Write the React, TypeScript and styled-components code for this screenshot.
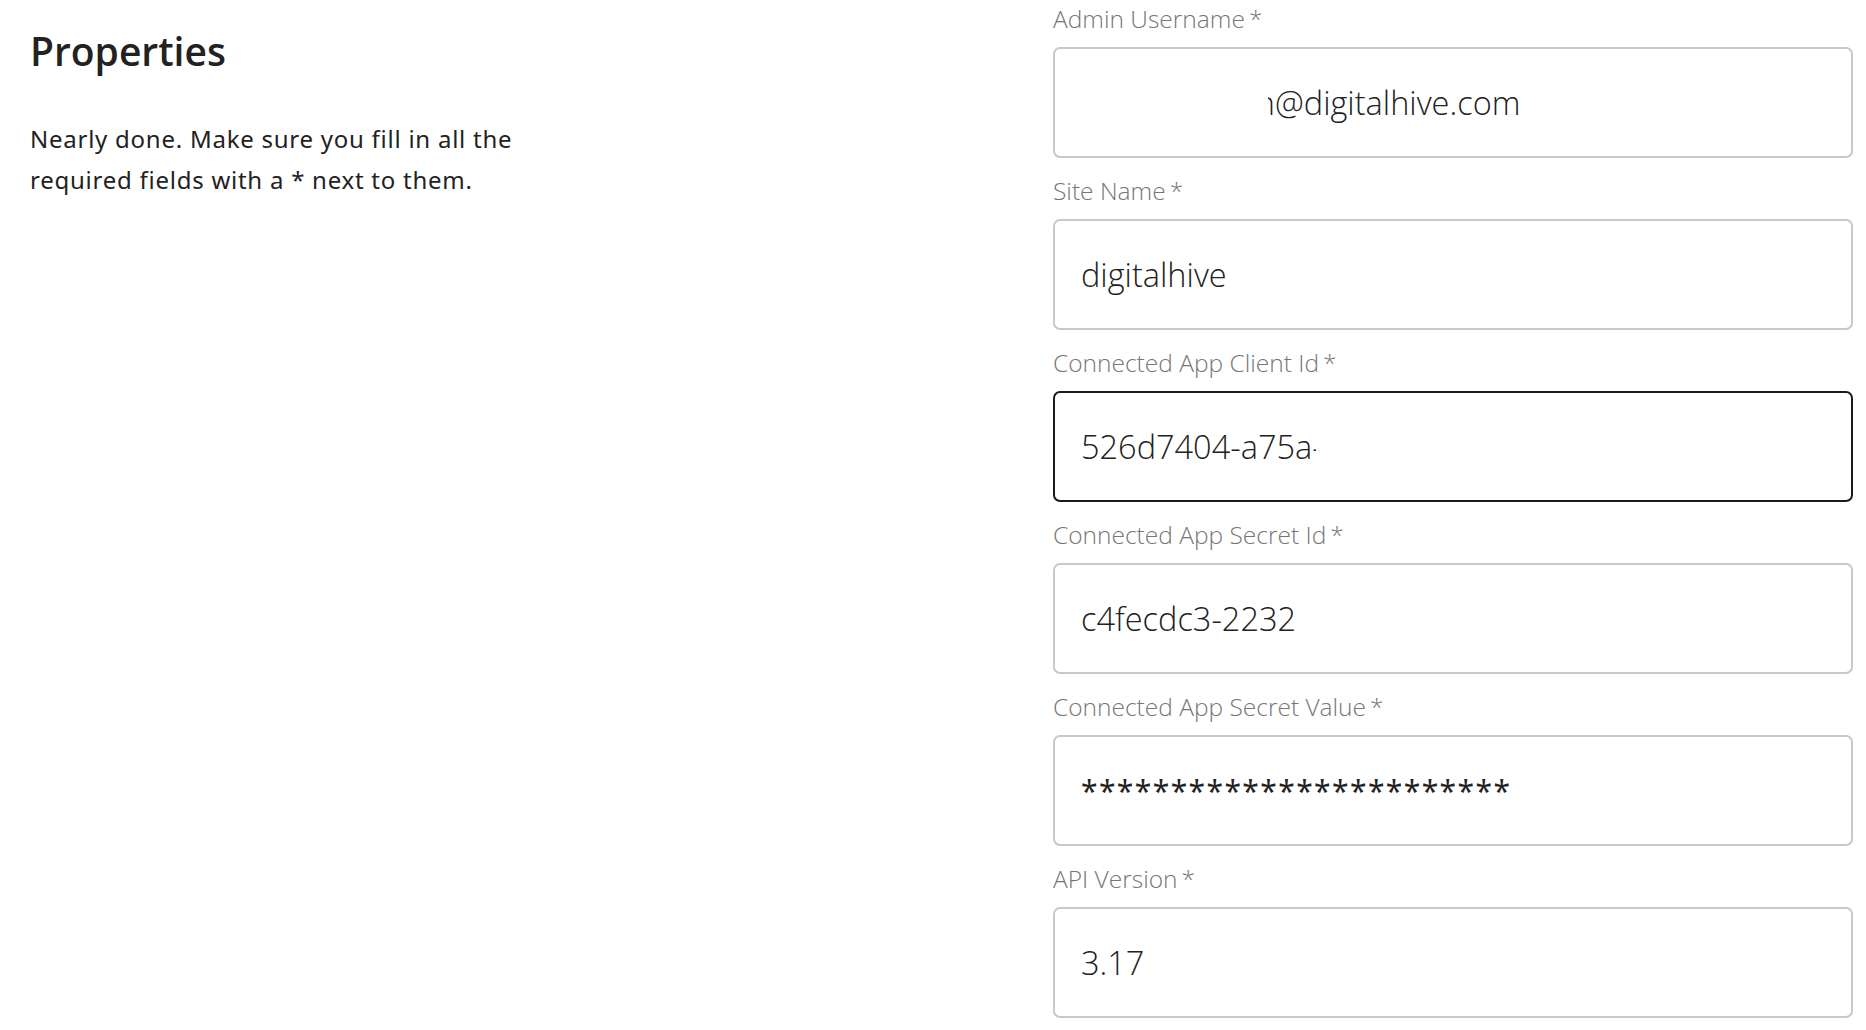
import React from 'react';
import styled, {createGlobalStyle} from 'styled-components';

const GlobalStyle = createGlobalStyle`
    html, body {
        margin: 0;
        padding: 0;
        background: #ffffff;
    }

    body {
        font-family: "Open Sans", "Noto Sans", sans-serif;
        color: #222222;
    }
`;

const Page = styled.div`
    display: grid;
    grid-template-columns: 1fr 800px;
    padding: 0 13px 0 30px;
    height: 1030px;
    overflow: hidden;
    box-sizing: border-box;
`;

const Intro = styled.div`
    display: flex;
    flex-direction: column;
`;

const Heading = styled.h2`
    margin: 27px 0 0 0;
    font-family: "Open Sans", sans-serif;
    font-size: 39px;
    line-height: 48px;
    font-weight: 600;
    color: #222222;
`;

const Description = styled.p`
    margin: 43px 0 0 0;
    width: 500px;
    font-family: "Noto Sans", "Open Sans", sans-serif;
    font-size: 24px;
    line-height: 41px;
    letter-spacing: 0.75px;
    color: #222222;
`;

const Form = styled.div`
    display: flex;
    flex-direction: column;
    gap: 17px;
    padding-top: 3px;
`;

const FieldGroup = styled.div`
    display: flex;
    flex-direction: column;
`;

const Label = styled.label`
    font-family: "Open Sans", sans-serif;
    font-weight: 300;
    font-size: 24.5px;
    line-height: 32px;
    color: #767676;
    margin-bottom: 12px;
`;

const Required = styled.span`
    margin-left: 4px;
`;

const InputBox = styled.div<{ $focused?: boolean }>`
    height: 111px;
    box-sizing: border-box;
    border: 2px solid ${(props) => (props.$focused ? "#1b1b1b" : "#c8c8c8")};
    border-radius: 7px;
    padding: 0 26px;
    display: flex;
    align-items: center;
    font-family: "Open Sans", sans-serif;
    font-weight: 300;
    font-size: 32.5px;
    color: #222222;
    white-space: nowrap;
    overflow: hidden;
`;

// redacted parts of the values: only a sliver of the text stays visible
const Clip = styled.span<{ $width: number }>`
    display: inline-block;
    width: ${(props) => props.$width}px;
    overflow: hidden;
    vertical-align: bottom;
`;

const TailClip = styled.span<{ $width: number, $indent: number }>`
    display: inline-block;
    width: ${(props) => props.$width}px;
    margin-left: ${(props) => props.$indent}px;
    overflow: hidden;
    direction: rtl;
    vertical-align: bottom;
`;

const Secret = styled.span`
    font-family: "Noto Sans", "Open Sans", sans-serif;
    font-weight: 400;
    font-size: 30px;
    letter-spacing: 1.4px;
    position: relative;
    top: 0;
`;

interface FieldProps {
    label: string
    focused?: boolean
    children: React.ReactNode
}

const Field = ({label, focused, children}: FieldProps) => {
    return (
        <FieldGroup>
            <Label>{label}<Required>*</Required></Label>
            <InputBox $focused={focused}>{children}</InputBox>
        </FieldGroup>
    );
};

const App = () => {
    return (
        <>
            <GlobalStyle/>
            <Page>
                <Intro>
                    <Heading>Properties</Heading>
                    <Description>
                        Nearly done. Make sure you fill in all the required fields with a * next to them.
                    </Description>
                </Intro>
                <Form>
                    <Field label="Admin Username">
                        <TailClip $width={7} $indent={187}>admin</TailClip>@digitalhive.com
                    </Field>
                    <Field label="Site Name">digitalhive</Field>
                    <Field label="Connected App Client Id" focused>
                        <Clip $width={235}>526d7404-a75a-4f1e-9c0d</Clip>
                    </Field>
                    <Field label="Connected App Secret Id">c4fecdc3-2232</Field>
                    <Field label="Connected App Secret Value">
                        <Secret>{"*".repeat(24)}</Secret>
                    </Field>
                    <Field label="API Version">3.17</Field>
                </Form>
            </Page>
        </>
    );
};

export default App;
